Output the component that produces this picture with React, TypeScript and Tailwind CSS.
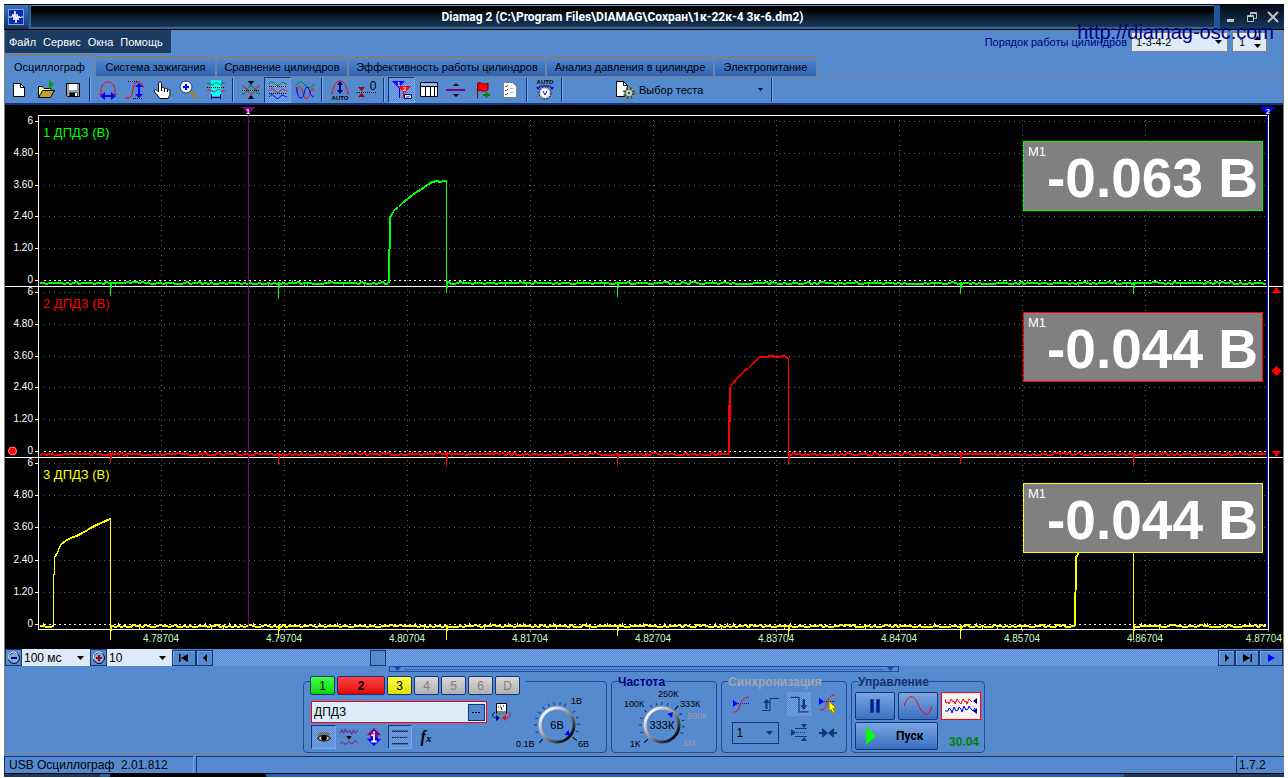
import type { ReactNode } from 'react';
import { useState } from 'react';

type Lane = {
  id: number;
  color: string;
  labelY: number;
  rows: number[];
  base: number;
  points: string;
  spikes: [number, number][];
  value: string;
};

const VOLTS = ['6', '4.80', '3.60', '2.40', '1.20', '0'];
const TIMES = [
  '4.78704', '4.79704', '4.80704', '4.81704', '4.82704',
  '4.83704', '4.84704', '4.85704', '4.86704', '4.87704',
];

// Flat part of a trace: a one pixel jitter with an occasional tick up or down
function noise(from: number, to: number, y: number) {
  let d = '';
  for (let x = from; x < to; x += 3) {
    const r = Math.abs(Math.sin(x * 12.9898 + y * 78.233) * 43758.5453) % 1;
    const dy = r > 0.93 ? -3 : r > 0.82 ? -1 : r < 0.04 ? 2 : r < 0.4 ? 1 : 0;
    if (dy === -3 || dy === 2) {
      d += ` ${x},${y} ${x + 1},${y} ${x + 1},${y + dy} ${x + 1},${y} ${x + 2},${y}`;
    } else {
      d += ` ${x},${y + dy} ${x + 2},${y + dy}`;
    }
  }
  return d;
}

const LANES: Lane[] = [
  {
    id: 1,
    color: '#00ff00',
    labelY: 137,
    rows: [121, 153, 185, 216, 248, 280],
    base: 282,
    points:
      noise(39, 386, 282) +
      ' 388,282 389,249 390,216 392,212 394,209 398,206 402,202 407,198 412,194 416,191 420,189 424,186 428,183 432,181 436,180 440,181 443,180 446,180 446,283' +
      noise(447, 1266, 282),
    spikes: [[110, 296], [278, 299], [446, 293], [617, 297], [960, 294], [1133, 294]],
    value: '-0.063 В',
  },
  {
    id: 2,
    color: '#ff0000',
    labelY: 308,
    rows: [292, 324, 356, 387, 419, 451],
    base: 453,
    points:
      noise(39, 726, 453) +
      ' 728,453 728,422 729,388 732,383 736,378 740,374 744,370 748,367 752,363 755,360 759,356 765,356 771,355 777,356 784,355 788,358 788,453' +
      noise(789, 1266, 453),
    spikes: [[110, 463], [278, 465], [446, 466], [617, 466], [788, 465], [960, 464], [1133, 466]],
    value: '-0.044 В',
  },
  {
    id: 3,
    color: '#ffff00',
    labelY: 479,
    rows: [463, 495, 527, 560, 592, 624],
    base: 625,
    points:
      noise(39, 51, 625) +
      ' 53,625 53,592 54,556 57,552 59,546 61,543 65,540 70,537 76,535 82,532 87,529 92,526 98,523 103,521 107,519 110,518 110,626' +
      noise(111, 1072, 625) +
      ' 1074,625 1075,592 1076,556 1079,550 1087,538 1110,528 1133,519 1133,626' +
      noise(1134, 1266, 625),
    spikes: [[110, 640], [278, 638], [446, 640], [617, 636], [788, 637], [960, 639], [1133, 640]],
    value: '-0.044 В',
  },
];

const DITHER =
  'bg-[conic-gradient(#79a5f0_25%,#568acf_0_50%,#79a5f0_0_75%,#568acf_0)] bg-[length:2px_2px]';

function Icon({ children, className = 'size-5' }: { children: ReactNode; className?: string }) {
  return (
    <svg viewBox="0 0 20 20" fill="none" className={`shrink-0 overflow-visible ${className}`} aria-hidden="true">
      {children}
    </svg>
  );
}

function ToolButton({ label, pressed, children }: { label: string; pressed?: boolean; children: ReactNode }) {
  return (
    <button
      type="button"
      aria-label={label}
      aria-pressed={pressed}
      className={`flex h-[26px] w-[27px] shrink-0 items-center justify-center border ${
        pressed ? `border-[#79a5f0] border-t-[#12357a] border-l-[#12357a] ${DITHER}` : 'border-transparent'
      }`}
    >
      <Icon>{children}</Icon>
    </button>
  );
}

function Separator() {
  return (
    <div className="flex w-2 shrink-0 justify-center">
      <div className="h-6 w-0.5 border-l border-[#12357a] bg-[#79a5f0]" />
    </div>
  );
}

function TitleBar() {
  return (
    <header className="flex h-[26px] items-stretch border-t border-b border-black bg-[#1d5796]">
      <div className="flex w-6 items-center justify-center bg-linear-to-b from-[#3a77bb] to-[#12365f]">
        <svg viewBox="0 0 16 16" className="size-4" aria-hidden="true">
          <rect width="16" height="16" fill="#0a2bb0" />
          <rect x="0.5" y="0.5" width="15" height="15" fill="none" stroke="#7d9de8" />
          <path d="M1 8h3l1-3 1 6 1-9 1 12 1-9 1 6 1-4 1 2 1-1h2" fill="none" stroke="#fff" />
        </svg>
      </div>
      <h1 className="ml-0.5 flex flex-1 items-center justify-center border-t border-b-2 border-l border-[#41678f] border-t-[#5a9ae0] bg-linear-to-b from-black via-[#0b1c2e] to-[#15395f] font-[Roboto,sans-serif] text-xs font-bold text-white">
        Diamag 2 (C:\Program Files\DIAMAG\Сохран\1к-22к-4 3к-6.dm2)
      </h1>
      <div className="ml-1.5 flex w-16 items-center justify-around bg-linear-to-b from-[#050d18] to-[#15395f]">
        <button type="button" aria-label="Свернуть" className="text-[#c0c0c0]">
          <svg viewBox="0 0 12 12" className="size-3" aria-hidden="true">
            <path d="M2 9.500h7" stroke="currentColor" strokeWidth="3" />
          </svg>
        </button>
        <button type="button" aria-label="Восстановить" className="text-[#c0c0c0]">
          <svg viewBox="0 0 12 12" className="size-3" fill="none" stroke="currentColor" aria-hidden="true">
            <path d="M1.500 4.500h6v6h-6zM1 5.500h7M4.500 4V1.500h6v6H8M4 2.500h7" />
          </svg>
        </button>
        <button type="button" aria-label="Закрыть" className="text-[#c0c0c0]">
          <svg viewBox="0 0 12 12" className="size-3" aria-hidden="true">
            <path d="M1 1l10 10M11 1L1 11" stroke="currentColor" strokeWidth="2" />
          </svg>
        </button>
      </div>
    </header>
  );
}

function Arrow({ className }: { className: string }) {
  return (
    <svg viewBox="0 0 7 4" className={`pointer-events-none absolute h-1 w-[7px] ${className}`} aria-hidden="true">
      <path d="M0 0h7L3.500 4z" fill="currentColor" />
    </svg>
  );
}

function MenuRow() {
  return (
    <div className="flex h-6 items-start justify-between">
      <nav className="flex h-[23px] items-center gap-[7px] bg-[#1b3b63] pr-2 pl-1 text-white">
        {['Файл', 'Сервис', 'Окна', 'Помощь'].map((item) => (
          <button key={item} type="button">{item}</button>
        ))}
      </nav>
      <div className="mt-0.5 mr-4 flex h-5 items-center gap-1">
        <label htmlFor="order" className="text-[#000080]">Порядок работы цилиндров</label>
        <div className="relative">
          <select id="order" className="h-5 w-[97px] appearance-none border border-[#808080] bg-[#deeaf7] pl-1 text-[11px] leading-4">
            <option>1-3-4-2</option>
          </select>
          <Arrow className="top-2 right-1.5" />
        </div>
        <div className="relative">
          <input
            aria-label="Цилиндр"
            defaultValue="1"
            className="h-5 w-[35px] border border-[#808080] bg-[#deeaf7] pl-1.5 text-[11px] leading-4"
          />
          <Arrow className="top-1 right-1.5 rotate-180" />
          <Arrow className="right-1.5 bottom-1" />
        </div>
      </div>
    </div>
  );
}

const TABS = [
  { name: 'Осциллограф', width: 'w-[90px]' },
  { name: 'Система зажигания', width: 'w-[120px]' },
  { name: 'Сравнение цилиндров', width: 'w-[131px]' },
  { name: 'Эффективность работы цилиндров', width: 'w-[197px]' },
  { name: 'Анализ давления в цилиндре', width: 'w-[167px]' },
  { name: 'Электропитание', width: 'w-[102px]' },
];

function Tabs() {
  const [active, setActive] = useState(0);
  return (
    <div role="tablist" className="flex h-[23px] items-end gap-px border-b border-[#808080]">
      {TABS.map((tab, i) => (
        <button
          key={tab.name}
          type="button"
          role="tab"
          aria-selected={i === active}
          onClick={() => setActive(i)}
          className={`shrink-0 rounded-t-sm border-t-2 border-r border-[#808080] ${tab.width} ${
            i === active ? '-mb-px h-[23px] bg-[#568acf]' : 'h-5 bg-linear-to-b from-[#568acf] to-[#2d62b0]'
          }`}
        >
          {tab.name}
        </button>
      ))}
    </div>
  );
}

function Toolbar() {
  return (
    <div className="flex h-7 items-center border-b-2 border-[#12357a] bg-[#568acf]">
      <ToolButton label="Новый">
        <path d="M4.500 3.500h7l4 4v9h-11z" fill="#fff" stroke="#000" />
        <path d="M11.500 3.500v4h4" stroke="#000" />
      </ToolButton>
      <ToolButton label="Открыть">
        <path d="M2.500 17V6.500h4l1.500 2h7V11" fill="#ffffc0" stroke="#000" />
        <path d="M2.500 17.500l4-7h12l-4 7z" fill="#c0a030" stroke="#000" />
        <path d="M13 0l5 4.500-5 4.500z" fill="#00a000" />
      </ToolButton>
      <ToolButton label="Сохранить">
        <path d="M3.500 3.500h13v13h-12l-1-1z" fill="#9aa0a8" stroke="#000" />
        <path d="M6 4h8v6H6z" fill="#fff" />
        <path d="M6.500 12.500h8v4h-8z" fill="#000" />
        <path d="M12 13h2v3h-2z" fill="#fff" />
      </ToolButton>
      <Separator />
      <ToolButton label="Масштаб по времени">
        <path d="M1 14.500h2V9c1-4 3-7 7-7s6 3 7 7v5.500h2" stroke="#f00" />
        <path d="M5 16h10" stroke="#00f" strokeWidth="2" />
        <path d="M2 16l5-4v8zM18 16l-5-4v8z" fill="#00f" />
      </ToolButton>
      <ToolButton label="Масштаб по амплитуде">
        <path d="M0 18h3c4 0 4-4 5-9s2-7 5-7 5 3 6 6" stroke="#f00" />
        <path d="M3 1.500h9M8 18.500h9" stroke="#000" strokeDasharray="1 1" />
        <path d="M14 6v9" stroke="#00f" strokeWidth="2" />
        <path d="M14 3l4 4h-8zM14 18l4-4h-8z" fill="#00f" />
      </ToolButton>
      <ToolButton label="Перемещение">
        <path d="M6.500 12V3.500c0-2 3-2 3 0V8c1-1 3-1 3 1 1-1 3-1 3 1 1-1 2.500 0 2.500 1v4l-2 3.500H8L2.500 12c-1-2 1-3 2-2z" fill="#fff" stroke="#000" />
        <path d="M9.500 8v3M12.500 9v3M15.500 10v2" stroke="#000" />
      </ToolButton>
      <ToolButton label="Лупа">
        <path d="M11 11l7 7" stroke="#a08020" strokeWidth="3" />
        <circle cx="7" cy="7" r="6" fill="#e8f4ff" stroke="#1a3a80" />
        <path d="M4 7h6M7 4v6" stroke="#00f" strokeWidth="2" />
      </ToolButton>
      <ToolButton label="Участок">
        <path d="M5 0h10v16H5z" fill="#0ff" />
        <path d="M1 3c3 0 3 2 5 2s3-3 5-2 3 2 4 1 2-1 4-1" stroke="#008000" />
        <path d="M1 7.500h18" stroke="#000" strokeDasharray="1 1" />
        <path d="M1 11c2-2 3-1 5 0s3 1 5-1 3 0 4 1 3-1 4 0" stroke="#f00" />
        <path d="M5.500 14v5M14.500 14v5M6 17.500h8" stroke="#000080" />
      </ToolButton>
      <Separator />
      <ToolButton label="Совместить">
        <path d="M1 6c5 0 5 8 9 8s4-8 9-8" stroke="#f00" />
        <path d="M1 14c5 0 5-8 9-8s4 8 9 8" stroke="#008000" />
        <path d="M1 10.500h18" stroke="#000" strokeDasharray="1 1" />
        <path d="M7 1h6l-3 4zM7 19h6l-3-4z" fill="#000" />
      </ToolButton>
      <ToolButton label="Раздельно" pressed>
        <path d="M1 4c2-3 4-3 6 0s4 1 6-1 4 1 6 1" stroke="#008000" />
        <path d="M1 11c2-3 4-3 6 0s4 1 6-1 4 1 6 1" stroke="#f00" />
        <path d="M1 17c2-3 4-3 6 0s4 1 6-1 4 1 6 1" stroke="#00f" />
        <path d="M1 6.500h18M1 13.500h18" stroke="#000" strokeDasharray="1 1" />
      </ToolButton>
      <ToolButton label="Наложить">
        <path d="M1 5c3-4 6-4 9 0s6 3 9-1" stroke="#008000" />
        <path d="M1 13c2-9 5-8 7 0s5 7 7 0 3-5 4-2" stroke="#f00" />
        <path d="M1 7c2 4 1 11 5 11s3-11 6-11 3 12 7 9" stroke="#00f" />
      </ToolButton>
      <Separator />
      <ToolButton label="Автомасштаб">
        <path d="M1 14h1c1-6 3-13 8-13s7 7 8 13h1" stroke="#f00" />
        <path d="M10 4v8" stroke="#000080" strokeWidth="2" />
        <path d="M10 1l3 4H7zM10 14l3-4H7z" fill="#000080" />
        <text x="10" y="20" textAnchor="middle" fill="#000" className="font-['Liberation_Sans',sans-serif] text-[6px] font-bold">AUTO</text>
      </ToolButton>
      <ToolButton label="Смещение нуля">
        <path d="M1 7h7l-3.500 4zM1 17h7l-3.500-4z" fill="#a00000" />
        <path d="M0 12.500h20" stroke="#000" strokeDasharray="1 1" />
        <text x="16" y="10" textAnchor="middle" fill="#000" className="font-['Liberation_Sans',sans-serif] text-xs">0</text>
      </ToolButton>
      <Separator />
      <ToolButton label="Маркеры" pressed>
        <path d="M0 1h13L6.500 8z" fill="#00f" />
        <path d="M7.500 8v10" stroke="#00f" />
        <path d="M6 6h13l-6.500 7z" fill="#f00" />
        <path d="M11.500 12v6" stroke="#f00" />
        <text x="5" y="6" fill="#fff" className="font-['Liberation_Sans',sans-serif] text-[6px] font-bold">1</text>
        <text x="11" y="11" fill="#fff" className="font-['Liberation_Sans',sans-serif] text-[6px] font-bold">2</text>
        <path d="M12.500 14.500h7v4h-7z" fill="#fff" stroke="#000080" />
        <path d="M14 17.500l1-1 1 1 2-2" stroke="#000080" />
      </ToolButton>
      <ToolButton label="Таблица">
        <path d="M1.500 2.500h17v14h-17z" fill="#fff" stroke="#000" />
        <path d="M2 3h16v3H2z" fill="#9ab8e8" />
        <path d="M1.500 6.500h17M6.500 7v9M11.500 7v9M15.500 7v9" stroke="#000" />
      </ToolButton>
      <ToolButton label="Горизонтальная линейка">
        <path d="M0 10h19" stroke="#800080" strokeWidth="2" />
        <path d="M7 6h6l-3-3zM7 14h6l-3 3z" fill="#000" />
      </ToolButton>
      <ToolButton label="Добавить метку">
        <path d="M4.500 3v15" stroke="#800000" />
        <path d="M5 3c3-2 4 3 10 0v7c-5 3-7-1-10 1z" fill="#f00" stroke="#800000" />
        <path d="M13.500 12v6M10 15h7" stroke="#008000" strokeWidth="2" />
      </ToolButton>
      <ToolButton label="Список">
        <path d="M3.500 2.500h9l4 4v11h-13z" fill="#fff" stroke="#808080" />
        <path d="M5 6l1 1 2-2M5 10l1 1 2-2M5 14l1 1 2-2" stroke="#606060" />
        <path d="M10 8.500h4M10 12.500h4" stroke="#c0c0c0" />
      </ToolButton>
      <Separator />
      <ToolButton label="Автонастройка">
        <text x="10" y="4" textAnchor="middle" fill="#000" className="font-['Liberation_Sans',sans-serif] text-[6px] font-bold">AUTO</text>
        <path d="M3 9c0-2 2-3 3-3h8c1 0 3 1 3 3" stroke="#000080" />
        <path d="M1 7l2 3 2-3zM15 7l2 3 2-3z" fill="#00f" />
        <circle cx="10" cy="13" r="6" fill="#c8d0d8" stroke="#000" strokeDasharray="2 1" />
        <circle cx="10" cy="13" r="4" fill="#fff" />
        <path d="M8 11l2 4 2-4" stroke="#00f" />
      </ToolButton>
      <Separator />
      <button type="button" className="flex w-[202px] items-center gap-1 pl-[49px] text-left">
        <Icon>
          <path d="M1.500 1.500h7l4 4v11h-11z" fill="#fff" stroke="#000" />
          <path d="M8.500 1.500v4h4" stroke="#000" />
          <circle cx="14" cy="13" r="5" fill="#c8d8c8" stroke="#405040" strokeWidth="2" strokeDasharray="2 2" />
          <circle cx="14" cy="13" r="4" fill="#b8ccb8" stroke="#405040" />
          <circle cx="14" cy="13" r="1" fill="#304030" />
        </Icon>
        <span className="flex-1">Выбор теста</span>
        <svg viewBox="0 0 7 4" className="mr-1 h-1 w-[7px]" aria-hidden="true">
          <path d="M1 0h5L3.500 3z" fill="#000" />
        </svg>
      </button>
      <Separator />
    </div>
  );
}

function Chart() {
  return (
    <section className="relative bg-black">
      <svg viewBox="5 105 1278 544" className="block h-auto w-full font-['Liberation_Sans',sans-serif]" shapeRendering="crispEdges" role="img" aria-label="Осциллограммы ДПДЗ">
        {LANES.map((lane) => (
          <g key={lane.id}>
            {lane.rows.map((y, i) => (
              <g key={y}>
                {i < 5 && <path d={`M44 ${y + 0.5}H1267`} stroke="#606060" strokeDasharray="1 4" />}
                <path d={`M35 ${y + 0.5}h4`} stroke="#fff" />
                <text x="33" y={y + 3} textAnchor="end" fill="#fff" className="text-[10px]">{VOLTS[i]}</text>
              </g>
            ))}
          </g>
        ))}
        {TIMES.map((t, i) => (
          <g key={t}>
            {i < 9 && <path d={`M${161.5 + i * 123} 120V628`} stroke="#606060" strokeDasharray="1 4" />}
            <path d={`M${161.5 + i * 123} 629v3`} stroke="#808080" />
            <text
              x={i < 9 ? 161 + i * 123 : 1282}
              y="642"
              textAnchor={i < 9 ? 'middle' : 'end'}
              fill="#c8ffc8"
              className="text-[10px]"
            >
              {t}
            </text>
          </g>
        ))}
        <path d="M5 286.500H1283M5 457.500H1283M38 629.500H1269M38 115.500H1269" stroke="#fff" />
        <path d="M38.500 115v515M1268.500 115v515" stroke="#fff" />
        <path d="M1267.500 115v513" stroke="#0000ff" />
        {LANES.map((lane) => (
          <g key={lane.id}>
            <polyline points={lane.points} fill="none" stroke={lane.color} transform="translate(0.5 0.5)" />
            <polyline points={lane.points} fill="none" stroke={lane.color} transform="translate(0.5 1.5)" />
            {lane.spikes.map(([x, y]) => (
              <path key={x} d={`M${x + 0.5} ${lane.base}V${y}M${x + 1.5} ${lane.base}v6`} stroke={lane.color} />
            ))}
            <path d={`M44 ${lane.rows[5] + 0.5}H1267`} stroke="#fff" strokeDasharray="2 3" />
            <text x="43" y={lane.labelY} fill={lane.color} className="text-[13px]">{`${lane.id} ДПДЗ (В)`}</text>
          </g>
        ))}
        <path d="M390 216v33M389 249v34" stroke="#00ff00" strokeWidth="2" />
        <path d="M730 388v34M729 422v32" stroke="#ff0000" strokeWidth="2" />
        <path d="M1076 556v34M1075 592v34" stroke="#ffff00" strokeWidth="2" />
        <path d="M248.500 112v517" stroke="#800080" />
        <path d="M241 107h15l-7.500 7z" fill="#800080" />
        <text x="248" y="114" textAnchor="middle" fill="#fff" className="text-[7px] font-bold">1</text>
        <path d="M1260 107h15l-7.500 8z" fill="#0000ff" />
        <text x="1268" y="114" textAnchor="middle" fill="#fff" className="text-[7px] font-bold">2</text>
        <circle cx="12.500" cy="451" r="4" fill="#ff0000" stroke="#ff9090" shapeRendering="auto" />
        <path d="M1272 293h9l-4.500-6zM1272 451h9l-4.500 6zM1276.500 366l5 5-5 5-5-5z" fill="#ff0000" />
      </svg>
      <div className="absolute top-9 right-5 flex flex-col gap-[101px]">
        {LANES.map((lane) => (
          <output
            key={lane.id}
            className="relative flex h-[70px] w-60 items-center justify-end border bg-[#808080] pt-1 pr-1 text-[55px] leading-none font-bold text-white"
            style={{ borderColor: lane.color }}
          >
            <span className="absolute top-0.5 left-1 text-[13px] leading-4 font-normal">М1</span>
            {lane.value}
          </output>
        ))}
      </div>
    </section>
  );
}

function BarButton({ label, className, children }: { label: string; className: string; children: ReactNode }) {
  return (
    <button
      type="button"
      aria-label={label}
      className={`flex h-4 shrink-0 items-center justify-center border border-[#12357a] bg-[#568acf] shadow-[inset_1px_1px_0_#79a5f0] ${className}`}
    >
      <svg viewBox="0 0 12 10" className="h-2.5 w-3" aria-hidden="true">{children}</svg>
    </button>
  );
}

function RoundButton({ label, plus }: { label: string; plus?: boolean }) {
  return (
    <button type="button" aria-label={label} className="flex h-[17px] w-[17px] shrink-0 items-center justify-center border border-[#12357a]">
      <svg viewBox="0 0 14 14" className="size-3.5" aria-hidden="true">
        <circle cx="7" cy="7" r="5.500" fill="#7fa9e4" stroke="#000" />
        <path d="M2.500 9a5 5 0 0 1 8-6" fill="none" stroke="#fff" />
        <path d={plus ? 'M4 7h6M7 4v6' : 'M4 7h6'} stroke={plus ? '#a00000' : '#000080'} strokeWidth="2" />
      </svg>
    </button>
  );
}

function ScrollRow() {
  return (
    <div className="flex h-[17px] items-center">
      <RoundButton label="Уменьшить развёртку" />
      <div className="relative">
        <select aria-label="Развёртка" className="block h-[17px] w-[68px] appearance-none bg-[#deeaf7] pl-0.5 text-xs leading-4">
          <option>100 мс</option>
        </select>
        <Arrow className="top-[7px] right-1.5" />
      </div>
      <RoundButton label="Увеличить развёртку" plus />
      <div className="relative">
        <select aria-label="Масштаб" className="block h-[17px] w-[65px] appearance-none bg-[#deeaf7] pl-0.5 text-xs leading-4">
          <option>10</option>
        </select>
        <Arrow className="top-[7px] right-1.5" />
      </div>
      <BarButton label="В начало" className="w-6"><path d="M1 1h1.500v8H1zM10 1v8L3 5z" /></BarButton>
      <BarButton label="Назад" className="w-[17px]"><path d="M8 1v8L4 5z" /></BarButton>
      <input
        type="range"
        aria-label="Позиция"
        min="0"
        max="1000"
        defaultValue="159"
        className={`h-4 min-w-0 flex-1 appearance-none ${DITHER} [&::-webkit-slider-thumb]:h-4 [&::-webkit-slider-thumb]:w-4 [&::-webkit-slider-thumb]:appearance-none [&::-webkit-slider-thumb]:border [&::-webkit-slider-thumb]:border-[#12357a] [&::-webkit-slider-thumb]:bg-[#568acf]`}
      />
      <BarButton label="Вперёд" className="w-[17px]"><path d="M4 1v8l4-4z" /></BarButton>
      <BarButton label="В конец" className="w-6"><path d="M9.500 1H11v8H9.500zM2 1v8l7-4z" /></BarButton>
      <BarButton label="Воспроизвести" className="w-6"><path d="M3 1v8l7-4z" fill="#0000ff" /></BarButton>
    </div>
  );
}

function Group({ title, className, children }: { title: ReactNode; className: string; children: ReactNode }) {
  return (
    <fieldset className={`shrink-0 rounded-sm border border-[#1c4ba8] pb-0.5 ${className}`}>
      <legend className="ml-1.5 h-2.5 text-xs leading-3 font-bold">{title}</legend>
      {children}
    </fieldset>
  );
}

const CHANNELS = [
  { name: '1', style: 'w-[25px] bg-linear-to-b from-[#40ff40] to-[#00d800]' },
  { name: '2', style: 'w-12 bg-linear-to-b from-[#ff4040] to-[#e00000] font-bold' },
  { name: '3', style: 'w-[25px] bg-linear-to-b from-[#ffff40] to-[#e0e000]' },
  { name: '4', style: 'w-[25px] bg-linear-to-b from-[#d8d8d8] to-[#b0b0b0] text-[#808080]' },
  { name: '5', style: 'w-[25px] bg-linear-to-b from-[#d8d8d8] to-[#b0b0b0] text-[#808080]' },
  { name: '6', style: 'w-[25px] bg-linear-to-b from-[#d8d8d8] to-[#b0b0b0] text-[#808080]' },
  { name: 'D', style: 'w-[25px] bg-linear-to-b from-[#d8d8d8] to-[#b0b0b0] text-[#808080]' },
];

type Mark = { text: string; x: number; y: number; off?: boolean };

function Knob({ cx, cy, value, pointer, marks, ticks, viewBox, className }: {
  cx: number;
  cy: number;
  value: string;
  pointer: number;
  marks: Mark[];
  ticks: number[];
  viewBox: string;
  className: string;
}) {
  return (
    <svg viewBox={viewBox} className={`shrink-0 font-['Liberation_Sans',sans-serif] ${className}`} role="img" aria-label={value}>
      <defs>
        <linearGradient id={`ring${cx}`} x1="0" y1="0" x2="1" y2="1">
          <stop offset="0.15" stopColor="#f4f4f4" />
          <stop offset="0.55" stopColor="#808080" />
          <stop offset="0.85" stopColor="#101010" />
        </linearGradient>
      </defs>
      {ticks.map((a) => (
        <path key={a} d="M0 -20v-3" stroke="#12357a" transform={`translate(${cx} ${cy}) rotate(${a})`} />
      ))}
      {[-135, pointer].map((a) => (
        <path key={a} d="M0 -20v-5" stroke="#000" transform={`translate(${cx} ${cy}) rotate(${a})`} />
      ))}
      <circle cx={cx} cy={cy} r="17" fill="#568acf" stroke={`url(#ring${cx})`} strokeWidth="3" />
      <path d="M0 -17l3 5h-6z" fill="#0000ff" transform={`translate(${cx} ${cy}) rotate(${pointer})`} />
      <text x={cx} y={cy + 4} textAnchor="middle" className="text-[11px]">{value}</text>
      {marks.map((m) => (
        <text key={m.text} x={m.x} y={m.y} fill={m.off ? '#9a9aa8' : '#000'} className="text-[9px]">{m.text}</text>
      ))}
    </svg>
  );
}

function ChannelGroup() {
  const sunken = `border border-[#79a5f0] border-t-[#12357a] border-l-[#12357a] ${DITHER}`;
  return (
    <Group
      className="w-[304px]"
      title={
        <div className="flex gap-0.5 pr-1.5">
          {CHANNELS.map((c) => (
            <button key={c.name} type="button" className={`h-[19px] rounded-xs border border-[#12357a] text-xs leading-4 ${c.name === '2' ? '' : 'font-normal'} ${c.style}`}>
              {c.name}
            </button>
          ))}
        </div>
      }
    >
      <div className="flex">
        <div className="flex w-[211px] flex-col gap-0.5 pt-[15px] pl-[7px]">
          <div className="flex items-center gap-1">
            <div className="flex h-[22px] w-44 items-center border border-[#ff0000] bg-[#deeaf7] pr-px">
              <input aria-label="Имя канала" defaultValue="ДПДЗ" className="min-w-0 flex-1 bg-transparent pl-0.5 text-xs leading-4" />
              <button type="button" aria-label="Выбрать" className="flex h-[17px] w-[17px] items-center justify-center border border-[#12357a] bg-[#568acf]">
                <svg viewBox="0 0 9 3" className="h-[3px] w-[9px]" aria-hidden="true"><path d="M0 1h2v1H0zM3 1h2v1H3zM6 1h2v1H6z" /></svg>
              </button>
            </div>
            <button type="button" aria-label="Датчик">
              <Icon>
                <path d="M5.500 1.500h10v10h-10z" fill="#fff" stroke="#000" />
                <path d="M6 9h9v3H6z" fill="#6a8a6a" />
                <path d="M7 5h1M9 4h1M12 4h1M10 5l1 3" stroke="#000" />
                <path d="M4 10c-4 2-3 6 3 6" stroke="#000080" />
                <path d="M5 13l4 3-4 3z" fill="#000080" />
                <path d="M17 10c4 2 3 6-3 6" stroke="#f00" />
                <path d="M15 13l-4 3 4 3z" fill="#f00" />
              </Icon>
            </button>
          </div>
          <div className="flex h-6 items-center">
            <button type="button" aria-label="Видимость" className={`flex h-6 w-[25px] items-center justify-center ${sunken}`}>
              <Icon className="size-3.5">
                <path d="M1 12c4-6 13-6 18 0-5 5-13 5-18 0z" fill="#e8d8c8" stroke="#403830" strokeWidth="2" />
                <circle cx="10" cy="11" r="4" fill="#000" />
                <path d="M1 7c5-4 12-4 17 0" stroke="#807050" strokeWidth="3" />
              </Icon>
            </button>
            <button type="button" aria-label="Фильтр" className="flex w-[25px] justify-center">
              <Icon className="size-[18px]">
                <path d="M0 6l2-4 2 4 2-5 2 4 3-2 2 4 2-5 2 4 3-4M0 18c3-5 4 0 6 0s3-4 5-2 3 2 4 0 2-3 5 1" stroke="#800080" />
                <path d="M7 9h6l-3 4z" fill="#000" />
              </Icon>
            </button>
            <button type="button" aria-label="Инверсия" className="flex w-[25px] justify-center">
              <Icon className="size-[18px]">
                <path d="M10 0l8 8h-4v2H6V8H2z" fill="#800080" />
                <path d="M10 20l8-8h-4v-2H6v2H2z" fill="#00f" />
                <path d="M7 8h3v7M7 15h6M10 4v2" stroke="#fff" strokeWidth="2" />
              </Icon>
            </button>
            <button type="button" aria-label="Нулевая линия" className={`ml-0.5 flex h-6 w-6 items-center justify-center ${sunken}`}>
              <Icon className="size-[18px]">
                <path d="M1 3.500h18M1 17.500h18" stroke="#000" />
                <path d="M1 10.500h18" stroke="#000" strokeDasharray="2 1" />
              </Icon>
            </button>
            <button type="button" className="w-7 font-['Liberation_Serif',serif] text-base leading-none font-bold italic">
              f<span className="text-[11px]">x</span>
            </button>
          </div>
        </div>
        <Knob
          cx={557}
          cy={726}
          value="6В"
          pointer={128}
          viewBox="515 687 90 64"
          className="h-16 w-[90px]"
          ticks={[-110, -90, -72, -55, -38, -22, -8, 8, 22, 52, 70, 88, 108]}
          marks={[
            { text: '1В', x: 571, y: 705 },
            { text: '0.1В', x: 516, y: 748 },
            { text: '6В', x: 578, y: 748 },
          ]}
        />
      </div>
    </Group>
  );
}

function SyncGroup() {
  return (
    <Group className="w-[126px]" title={<span className="text-[#a0a4ac]">Синхронизация</span>}>
      <div className="grid grid-cols-4 items-center justify-items-center gap-y-1.5 px-1 pt-1.5">
        <button type="button" aria-label="Уровень">
          <Icon>
            <path d="M2 6l5 3.500L2 13z" fill="#00f" />
            <path d="M7 9.500h12" stroke="#00f" strokeDasharray="1 1" />
            <path d="M2 18c5 0 6-3 7-7s4-8 9-8" stroke="#f00" />
          </Icon>
        </button>
        <button type="button" aria-label="Фронт">
          <Icon>
            <path d="M2 16.500h8v-12h9" stroke="#12357a" />
            <path d="M6.500 15V8" stroke="#12357a" strokeWidth="2" />
            <path d="M3 9l3.500-4L10 9z" fill="#12357a" />
          </Icon>
        </button>
        <button type="button" aria-label="Спад" className={DITHER}>
          <Icon className="size-6">
            <path d="M3 4.500h7v12h8" stroke="#12357a" />
            <path d="M14 6v7" stroke="#12357a" strokeWidth="2" />
            <path d="M11 11l3 4 3-4z" fill="#12357a" />
          </Icon>
        </button>
        <button type="button" aria-label="Выбрать уровень">
          <Icon>
            <path d="M1 4l5 3.500L1 11z" fill="#00f" />
            <path d="M6 7.500h12" stroke="#00f" strokeDasharray="1 1" />
            <path d="M2 16c5 0 6-3 7-7s3-8 8-8" stroke="#f00" />
            <path d="M11 7l7 7-3 .5 2 4-2 1-2-4-2 2z" fill="#ff0" stroke="#808000" />
          </Icon>
        </button>
        <div className="relative col-span-2">
          <select aria-label="Канал синхронизации" className="block h-[22px] w-[47px] appearance-none border border-[#12357a] bg-[#568acf] pl-1 text-xs leading-4">
            <option>1</option>
          </select>
          <Arrow className="top-[9px] right-1.5 text-[#12357a]" />
        </div>
        <button type="button" aria-label="Гистерезис">
          <Icon>
            <path d="M2 6l5 3.500L2 13z" fill="#12357a" />
            <path d="M7 9.500h10" stroke="#12357a" strokeDasharray="1 1" />
            <path d="M6 5.500h12M6 13.500h12" stroke="#12357a" />
            <path d="M12 1h6l-3 4zM12 18h6l-3-4z" fill="#12357a" />
          </Icon>
        </button>
        <button type="button" aria-label="Центр">
          <Icon>
            <path d="M1 10h5M14 10h5" stroke="#12357a" strokeWidth="2" />
            <path d="M4 5l6 5-6 5zM16 5l-6 5 6 5z" fill="#12357a" />
          </Icon>
        </button>
      </div>
    </Group>
  );
}

function ControlGroup() {
  const face = 'rounded-xs border border-[#12357a] bg-linear-to-b from-[#7aa6e2] to-[#3a70c2]';
  return (
    <Group className="w-[134px]" title={<span className="text-[#12306e]">Управление</span>}>
      <div className="grid grid-cols-3 gap-x-[3px] gap-y-0.5 px-[3px] pt-1.5">
        <button type="button" aria-label="Пауза" className={`flex h-7 items-center justify-center ${face}`}>
          <svg viewBox="0 0 12 14" className="h-3.5 w-3" aria-hidden="true">
            <path d="M1.500.5h3v13h-3zM7.500.5h3v13h-3z" fill="#00f" stroke="#006040" />
          </svg>
        </button>
        <button type="button" aria-label="Один кадр" className={`flex h-7 items-center justify-center ${face}`}>
          <svg viewBox="0 0 28 20" className="h-5 w-7" fill="none" stroke="#f00" aria-hidden="true">
            <path d="M0 10C4-2 10-2 14 8s10 16 14 2" />
          </svg>
        </button>
        <button type="button" aria-label="Непрерывно" className="flex h-7 items-center justify-center border border-[#ff0000] bg-[#f4f4f4]">
          <svg viewBox="0 0 32 20" className="h-5 w-8" fill="none" aria-hidden="true">
            <path d="M0 3l1 4 2-1 1 2 2-5 2 3 1-1 1 3 2-5 2 3 2 2 2-5 2 3 1-1 1 3 2-5 3 3" stroke="#f00" />
            <path d="M0 15h3l1-3 2 2 1 3 2-6 2 4 2-1 1-3 2 2 1 3 2-6 2 4 2-1 1-3 2 3 2 2 2-3" stroke="#00f" />
            <path d="M32 2v6l-4-3zM32 12v6l-4-3z" fill="#000080" />
          </svg>
        </button>
        <button type="button" className={`col-span-2 flex h-7 items-center gap-5 pl-2.5 font-[Roboto,sans-serif] text-xs font-bold ${face}`}>
          <svg viewBox="0 0 10 18" className="h-[18px] w-2.5" aria-hidden="true">
            <path d="M0 0l10 9-10 9z" fill="#00ff00" />
          </svg>
          Пуск
        </button>
        <output className="self-end pr-0.5 text-right text-xs leading-4 font-bold text-[#008000]">30.04</output>
      </div>
    </Group>
  );
}

function BottomPanel() {
  return (
    <div className="border-b border-[#808080]">
      <div className="mx-auto flex h-1.5 w-[510px] items-center justify-between border border-[#1c4ba8] px-1 text-[#1c4ba8]">
        <svg viewBox="0 0 7 4" className="h-1 w-[7px]" aria-hidden="true"><path d="M0 0h7L3.500 4z" fill="currentColor" /></svg>
        <div className="mx-1 flex-1 border-t border-dotted" />
        <svg viewBox="0 0 7 4" className="h-1 w-[7px]" aria-hidden="true"><path d="M0 0h7L3.500 4z" fill="currentColor" /></svg>
      </div>
      <div className="flex items-stretch justify-center gap-1 pt-1">
        <ChannelGroup />
        <Group className="w-[106px]" title={<span className="text-[#000080]">Частота</span>}>
          <Knob
            cx={661}
            cy={726}
            value="333К"
            pointer={40}
            viewBox="611 687 104 64"
            className="h-16 w-[104px]"
            ticks={[-110, -90, -72, -50, -30, -15, 0, 15, 60, 78, 95, 112]}
            marks={[
              { text: '250К', x: 657, y: 698 },
              { text: '100К', x: 623, y: 708 },
              { text: '333К', x: 679, y: 708 },
              { text: '500К', x: 686, y: 720, off: true },
              { text: '1К', x: 629, y: 748 },
              { text: '1М', x: 682, y: 747, off: true },
            ]}
          />
        </Group>
        <SyncGroup />
        <ControlGroup />
      </div>
    </div>
  );
}

export default function App() {
  return (
    <div className="relative bg-white px-1 pt-1 font-['Liberation_Sans',Arial,sans-serif] text-[11px] leading-4 text-black">
      <TitleBar />
      <main className="border-x border-[#808080] bg-[#568acf]">
        <MenuRow />
        <Tabs />
        <Toolbar />
        <Chart />
        <ScrollRow />
        <BottomPanel />
      </main>
      <footer className="flex h-5 gap-0.5 border-b border-black bg-[#568acf] pt-0.5 text-xs">
        <div className="w-[190px] border-t border-l border-[#12357a] border-r border-r-[#79a5f0] pl-1 whitespace-pre">USB Осциллограф  2.01.812</div>
        <div className="flex-1 border-t border-l border-[#12357a]" />
        <div className="w-12 border-t border-l border-[#12357a] pl-0.5">1.7.2</div>
      </footer>
      <div className="flex h-[3px] justify-between bg-[#1c66c0]">
        <div className="flex gap-2.5">
          <div className="w-24 bg-[#1b3b63]" />
          <div className="w-[156px] bg-black" />
        </div>
        <div className="w-40 bg-[#1b3b63]" />
      </div>
      <a href="http://diamag-osc.com" className="absolute top-5 right-3.5 text-xl leading-6 text-[#000080]">http://diamag-osc.com</a>
    </div>
  );
}
